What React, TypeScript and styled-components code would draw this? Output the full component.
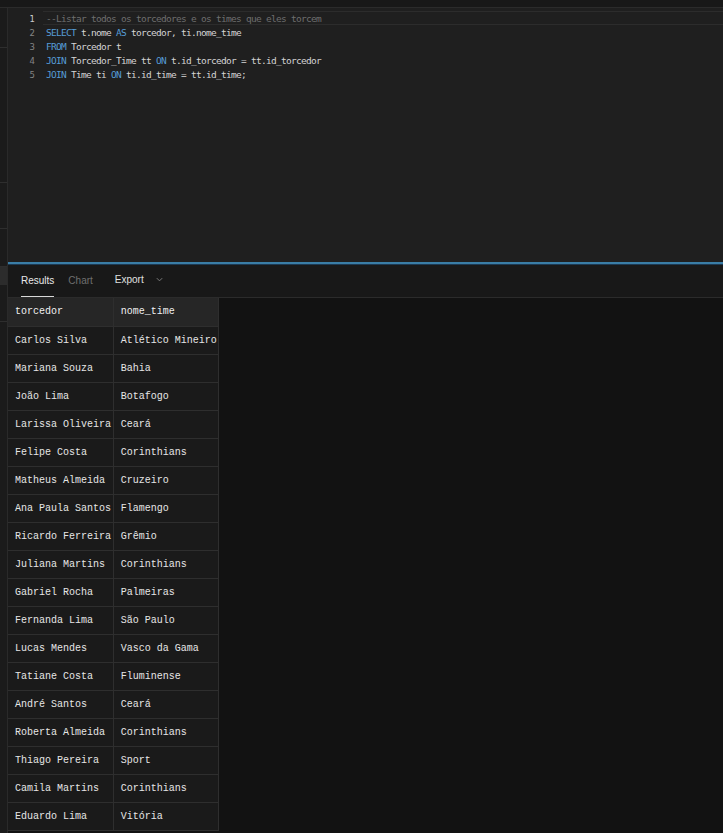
import React from 'react';
import styled, { createGlobalStyle } from 'styled-components';

const Global = createGlobalStyle`
  html, body { margin: 0; padding: 0; background: #181818; }
  body { width: 723px; height: 833px; overflow: hidden; }
`;

const rows: [string, string][] = [
  ['Carlos Silva', 'Atlético Mineiro'],
  ['Mariana Souza', 'Bahia'],
  ['João Lima', 'Botafogo'],
  ['Larissa Oliveira', 'Ceará'],
  ['Felipe Costa', 'Corinthians'],
  ['Matheus Almeida', 'Cruzeiro'],
  ['Ana Paula Santos', 'Flamengo'],
  ['Ricardo Ferreira', 'Grêmio'],
  ['Juliana Martins', 'Corinthians'],
  ['Gabriel Rocha', 'Palmeiras'],
  ['Fernanda Lima', 'São Paulo'],
  ['Lucas Mendes', 'Vasco da Gama'],
  ['Tatiane Costa', 'Fluminense'],
  ['André Santos', 'Ceará'],
  ['Roberta Almeida', 'Corinthians'],
  ['Thiago Pereira', 'Sport'],
  ['Camila Martins', 'Corinthians'],
  ['Eduardo Lima', 'Vitória'],
];

type Tok = { t: string; k?: 'kw' | 'cm' };
const code: Tok[][] = [
  [{ t: '--Listar todos os torcedores e os times que eles torcem', k: 'cm' }],
  [{ t: 'SELECT', k: 'kw' }, { t: ' t.nome ' }, { t: 'AS', k: 'kw' }, { t: ' torcedor, ti.nome_time' }],
  [{ t: 'FROM', k: 'kw' }, { t: ' Torcedor t' }],
  [{ t: 'JOIN', k: 'kw' }, { t: ' Torcedor_Time tt ' }, { t: 'ON', k: 'kw' }, { t: ' t.id_torcedor = tt.id_torcedor' }],
  [{ t: 'JOIN', k: 'kw' }, { t: ' Time ti ' }, { t: 'ON', k: 'kw' }, { t: ' ti.id_time = tt.id_time;' }],
];

const App = () => {
  return (
    <>
      <Global />
      <Page>
        <TopBar />
        <Main>
          <SideStrip>
            <StripMark $h={39} />
            <StripMark $h={134} />
            <StripMark $h={45} />
            <StripMark $h={37} />
            <StripBlock />
            <StripMark $h={36} />
          </SideStrip>
          <Content>
            <Editor>
              {code.map((line, i) => (
                <Line key={i}>
                  <LineNo $active={i === 0}>{i + 1}</LineNo>
                  <Code $active={i === 0}>
                    {line.map((tok, j) => (
                      <Token key={j} $k={tok.k}>{tok.t}</Token>
                    ))}
                  </Code>
                </Line>
              ))}
            </Editor>
            <Divider />
            <Results>
              <Tabs>
                <Tab $active>Results</Tab>
                <Tab>Chart</Tab>
                <ExportBtn>
                  Export
                  <svg width="9" height="9" viewBox="0 0 10 10">
                    <path d="M2 3.5 L5 6.5 L8 3.5" fill="none" stroke="#7a7a7a" strokeWidth="1.1" />
                  </svg>
                </ExportBtn>
              </Tabs>
              <Grid>
                <Table>
                  <colgroup>
                    <col style={{ width: 105 }} />
                    <col style={{ width: 105 }} />
                  </colgroup>
                  <thead>
                    <tr>
                      <Th>torcedor</Th>
                      <Th>nome_time</Th>
                    </tr>
                  </thead>
                  <tbody>
                    {rows.map(([a, b]) => (
                      <tr key={a}>
                        <Td>{a}</Td>
                        <Td>{b}</Td>
                      </tr>
                    ))}
                  </tbody>
                </Table>
              </Grid>
            </Results>
          </Content>
        </Main>
      </Page>
    </>
  );
};

export default App;

const Page = styled.div`
  width: 723px;
  height: 833px;
  display: flex;
  flex-direction: column;
  background: #181818;
`;

const TopBar = styled.div`
  height: 7px;
  background: #181818;
  border-bottom: 1px solid #2b2b2b;
  flex-shrink: 0;
`;

const Main = styled.div`
  flex: 1;
  display: flex;
  min-height: 0;
`;

const SideStrip = styled.div`
  width: 7px;
  background: #1b1b1b;
  border-right: 1px solid #2a2a2a;
  display: flex;
  flex-direction: column;
  flex-shrink: 0;
`;

const StripMark = styled.div<{ $h: number }>`
  height: ${p => p.$h}px;
  border-bottom: 1px solid #2e2e2e;
`;

const StripBlock = styled.div`
  height: 18px;
  background: #2c2c2c;
`;

const Content = styled.div`
  flex: 1;
  display: flex;
  flex-direction: column;
  min-width: 0;
`;

const Editor = styled.div`
  height: 254px;
  background: #1f1f1f;
  padding-top: 3px;
  box-sizing: border-box;
`;

const Line = styled.div`
  height: 14px;
  display: flex;
  align-items: center;
`;

const LineNo = styled.div<{ $active?: boolean }>`
  width: 27px;
  text-align: right;
  font-family: 'DejaVu Sans', sans-serif;
  font-size: 8.5px;
  color: ${p => (p.$active ? '#cccccc' : '#858585')};
  padding-right: 8px;
  padding-top: 1px;
  flex-shrink: 0;
`;

const Code = styled.div<{ $active?: boolean }>`
  flex: 1;
  height: 14px;
  box-sizing: border-box;
  display: flex;
  align-items: center;
  padding-left: 3px;
  padding-top: 1px;
  white-space: pre;
  border-top: 1px solid ${p => (p.$active ? '#2c2c2c' : 'transparent')};
  border-bottom: 1px solid ${p => (p.$active ? '#2c2c2c' : 'transparent')};
  font-family: 'DejaVu Sans Mono', monospace;
  font-size: 9.5px;
  letter-spacing: -0.72px;
`;

const Token = styled.span<{ $k?: 'kw' | 'cm' }>`
  color: ${p => (p.$k === 'kw' ? '#569cd6' : p.$k === 'cm' ? '#6e6e6e' : '#d4d4d4')};
`;

const Divider = styled.div`
  height: 2px;
  background: #3a7da6;
  border-bottom: 1px solid #1c3952;
  flex-shrink: 0;
`;

const Results = styled.div`
  flex: 1;
  display: flex;
  flex-direction: column;
  background: #181818;
  min-height: 0;
`;

const Tabs = styled.div`
  height: 32px;
  display: flex;
  align-items: stretch;
  padding-left: 13px;
  gap: 14px;
  border-bottom: 1px solid #2b2b2b;
  flex-shrink: 0;
`;

const Tab = styled.div<{ $active?: boolean }>`
  font-family: 'Liberation Sans', Arial, sans-serif;
  font-size: 10px;
  color: ${p => (p.$active ? '#e8e8e8' : '#6f6f6f')};
  display: flex;
  align-items: center;
  padding-bottom: 1px;
  box-sizing: border-box;
  box-shadow: ${p => (p.$active ? 'inset 0 -1px 0 #d8d8d8' : 'none')};
`;

const ExportBtn = styled.div`
  font-family: 'Liberation Sans', Arial, sans-serif;
  font-size: 10px;
  color: #e0e0e0;
  display: flex;
  align-items: center;
  gap: 11px;
  margin-left: 8px;
  padding-bottom: 3px;
`;

const Grid = styled.div`
  flex: 1;
  background: #121212;
  overflow: hidden;
`;

const Table = styled.table`
  border-collapse: collapse;
  table-layout: fixed;
  width: 211px;
  background: #1a1a1a;
  font-family: 'Liberation Mono', 'DejaVu Sans Mono', monospace;
  font-size: 10px;
  color: #e6e6e6;
`;

const Th = styled.th`
  height: 28px;
  padding: 0 0 0 7px;
  box-sizing: border-box;
  text-align: left;
  font-weight: 400;
  color: #f0f0f0;
  background: #262626;
  border-right: 1px solid #2e2e2e;
  border-bottom: 1px solid #2e2e2e;
  white-space: nowrap;
  overflow: hidden;
`;

const Td = styled.td`
  height: 28px;
  padding: 0 0 0 7px;
  box-sizing: border-box;
  border-right: 1px solid #2e2e2e;
  border-bottom: 1px solid #2e2e2e;
  white-space: nowrap;
  overflow: hidden;
`;
